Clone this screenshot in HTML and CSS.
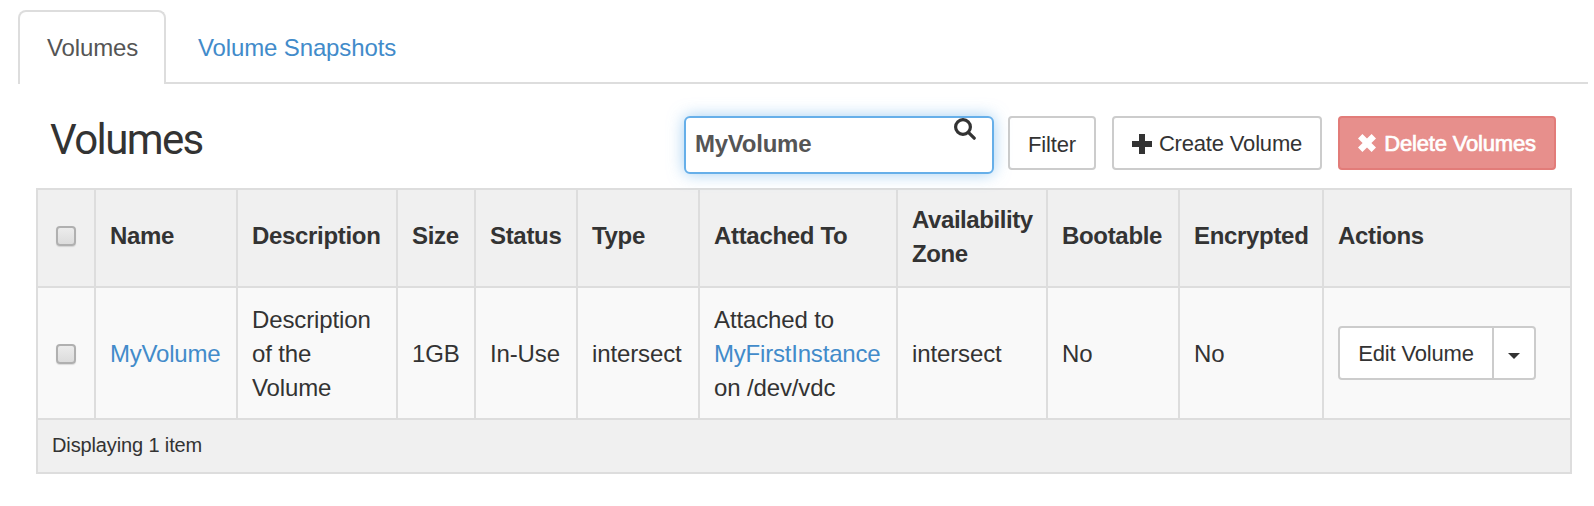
FILE: index.html
```html
<!DOCTYPE html>
<html lang="en">
<head>
<meta charset="utf-8">
<title>Volumes</title>
<link rel="stylesheet" href="styles.css">
</head>
<body>
<nav class="tabs">
  <a class="tab tab-active">Volumes</a>
  <a class="tab">Volume Snapshots</a>
</nav>
<main class="panel">
  <header class="toolbar">
    <h3 class="title">Volumes</h3>
    <div class="search">
      <input class="search-input" type="text" value="MyVolume" aria-label="Search">
      <svg class="search-icon" viewBox="0 0 22 22"><circle cx="9" cy="9" r="7.4" fill="none" stroke="#333" stroke-width="3.2"/><path d="M14.4 14.4L20.2 20.2" stroke="#333" stroke-width="3.2" stroke-linecap="round"/></svg>
    </div>
    <button class="btn btn-filter">Filter</button>
    <button class="btn btn-create"><svg class="plus" viewBox="0 0 20 20"><path d="M7 0h6v7h7v6h-7v7H7v-7H0V7h7z" fill="#333"/></svg><span>Create Volume</span></button>
    <button class="btn btn-delete"><svg class="cross" viewBox="0 0 18 18"><path d="M4.4 0L9 4.6L13.6 0L18 4.4L13.4 9L18 13.6L13.6 18L9 13.4L4.4 18L0 13.6L4.6 9L0 4.4z" fill="#fff"/></svg><span>Delete Volumes</span></button>
  </header>
  <table class="volumes">
    <colgroup>
      <col class="c-check"><col class="c-name"><col class="c-desc"><col class="c-size"><col class="c-status"><col class="c-type"><col class="c-attached"><col class="c-zone"><col class="c-boot"><col class="c-enc"><col class="c-actions">
    </colgroup>
    <thead>
      <tr>
        <th class="check-cell"><input class="check" type="checkbox" aria-label="Select all"></th>
        <th>Name</th><th>Description</th><th>Size</th><th>Status</th><th>Type</th><th>Attached To</th><th class="two-line">Availability Zone</th><th>Bootable</th><th>Encrypted</th><th>Actions</th>
      </tr>
    </thead>
    <tbody>
      <tr>
        <td class="check-cell"><input class="check" type="checkbox" aria-label="Select MyVolume"></td>
        <td><a class="link">MyVolume</a></td>
        <td>Description of the Volume</td>
        <td>1GB</td>
        <td>In-Use</td>
        <td>intersect</td>
        <td>Attached to <a class="link">MyFirstInstance</a> on /dev/vdc</td>
        <td>intersect</td>
        <td>No</td>
        <td>No</td>
        <td class="actions-cell"><div class="btn-group"><button class="btn btn-edit">Edit Volume</button><button class="btn btn-toggle" aria-label="More actions"><span class="caret"></span></button></div></td>
      </tr>
    </tbody>
    <tfoot>
      <tr><td colspan="11">Displaying 1 item</td></tr>
    </tfoot>
  </table>
</main>
</body>
</html>
```
FILE: styles.css
```css
* { box-sizing: border-box; }

body {
  margin: 0;
  background: #fff;
  color: #333;
  font: 24px/34px "Liberation Sans", Arial, sans-serif;
  letter-spacing: -.13px;
}

.tabs {
  display: flex;
  gap: 4px;
  height: 74px;
  margin: 10px 6px 0 18px;
  box-shadow: inset 0 -2px #ddd;
}

.tab {
  height: 74px;
  padding: 19px 26px 0;
  border: 2px solid transparent;
  border-bottom: 0;
  color: #428bca;
  white-space: nowrap;
}

.tab-active {
  width: 148px;
  padding-left: 27px;
  border-color: #ddd;
  border-radius: 8px 8px 0 0;
  background: #fff;
  color: #555;
}

.panel { padding: 32px 22px 0 36px; }

.toolbar {
  display: flex;
  align-items: flex-start;
  height: 72px;
  padding: 0 16px 0 14px;
}

.title {
  margin: 0 auto 0 0;
  font: 400 42px/48px Roboto, sans-serif;
  letter-spacing: -1.6px;
}

.search {
  position: relative;
  width: 310px;
  height: 58px;
  margin-right: 14px;
}

.search-input {
  width: 310px;
  height: 58px;
  padding: 0 60px 3px 9px;
  border: 2px solid #66afe9;
  border-radius: 6px;
  outline: 0;
  background: #fff;
  box-shadow: 0 0 16px rgba(102, 175, 233, .6);
  color: #555;
  font: bold 24px/34px "Liberation Sans", Arial, sans-serif;
  letter-spacing: -.25px;
}

.search-icon {
  position: absolute;
  top: 2px;
  left: 270px;
  width: 22px;
  height: 22px;
}

.btn {
  display: flex;
  align-items: center;
  justify-content: center;
  height: 54px;
  padding: 0;
  border: 2px solid #ccc;
  border-radius: 4px;
  background: #fff;
  color: #333;
  font: 22px/30px "Liberation Sans", Arial, sans-serif;
  letter-spacing: -.18px;
  white-space: nowrap;
}

.btn-filter { width: 88px; margin-right: 16px; padding-top: 3px; }
.btn-create { width: 210px; margin-right: 16px; gap: 7px; padding-top: 1px; }
.btn-delete {
  width: 218px;
  gap: 8px;
  padding-top: 2px;
  border-color: #e27c79;
  background: #e78f8c;
  color: #fff;
  -webkit-text-stroke: .7px #fff;
}

.plus { width: 20px; height: 20px; }
.cross { width: 18px; height: 18px; margin-top: -2px; }

.volumes {
  width: 1536px;
  border-collapse: collapse;
  table-layout: fixed;
  background: #f9f9f9;
}

.volumes th,
.volumes td {
  padding: 0 0 0 14px;
  border: 2px solid #ddd;
  text-align: left;
  vertical-align: middle;
}

.volumes th { height: 98px; padding-bottom: 4px; background: #f0f0f0; letter-spacing: -.32px; }
.volumes .two-line { padding-bottom: 2px; letter-spacing: -.42px; }
.volumes td { height: 132px; padding-top: 2px; }
.volumes .actions-cell { padding-top: 0; }
.volumes tfoot td { height: 54px; padding-top: 0; padding-bottom: 2px; background: #f0f0f0; font-size: 20px; }
.volumes .check-cell { padding-left: 18px; }

.c-check { width: 58px; }
.c-name { width: 142px; }
.c-desc { width: 160px; }
.c-size { width: 78px; }
.c-status { width: 102px; }
.c-type { width: 122px; }
.c-attached { width: 198px; }
.c-zone { width: 150px; }
.c-boot { width: 132px; }
.c-enc { width: 144px; }
.c-actions { width: 248px; }

.volumes td:nth-child(3) { padding-right: 20px; }

.check {
  display: block;
  width: 20px;
  height: 20px;
  margin: 0;
  appearance: none;
  border: 2px solid #b0b0b0;
  border-radius: 4px;
  background: linear-gradient(#ececec, #dcdcdc);
  box-shadow: 0 1px 1px rgba(0, 0, 0, .12);
}

.link { color: #428bca; letter-spacing: -.2px; }

.btn-group { display: flex; }
.btn-edit { width: 156px; border-radius: 4px 0 0 4px; padding-top: 2px; }
.btn-toggle { width: 44px; margin-left: -2px; border-radius: 0 4px 4px 0; padding-top: 6px; }

.caret {
  border: 6px solid transparent;
  border-top-color: #333;
  border-bottom: 0;
}
```
